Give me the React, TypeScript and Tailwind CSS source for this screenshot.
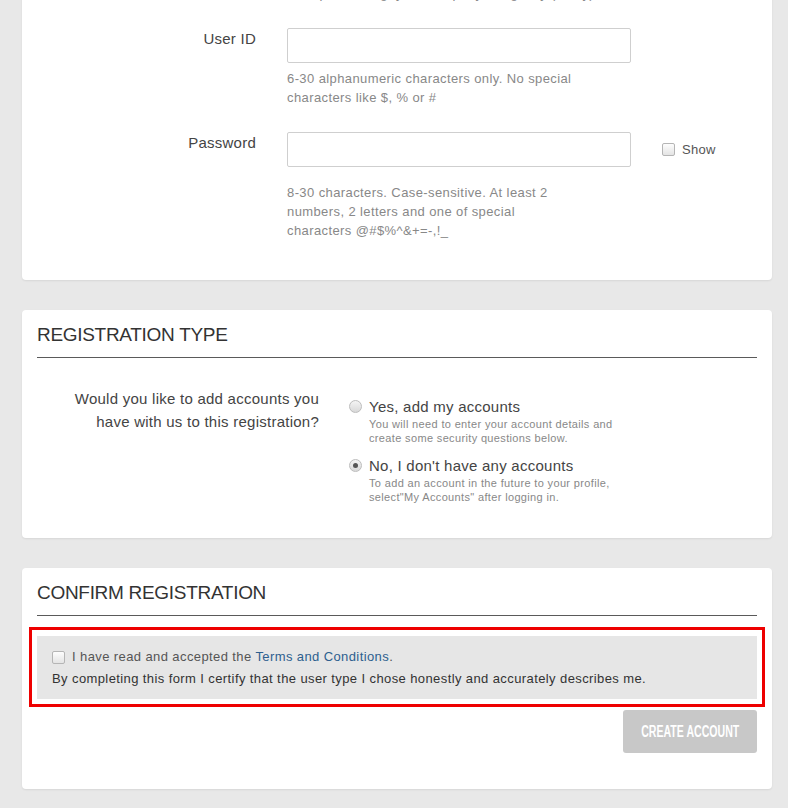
import React from "react";

const font = { fontFamily: '"Liberation Sans", Arial, sans-serif' };

function Checkbox({ className = "" }: { className?: string }) {
  return (
    <span
      className={`inline-block h-[13px] w-[13px] shrink-0 rounded-[2px] border border-[#b5b5b5] bg-gradient-to-b from-[#fdfdfd] to-[#e4e4e4] ${className}`}
    />
  );
}

function Radio({ checked }: { checked?: boolean }) {
  return (
    <span className="mt-[3px] grid h-[13px] w-[13px] shrink-0 place-items-center rounded-full border border-[#bdbdbd] bg-gradient-to-b from-[#f4f4f4] to-[#d9d9d9]">
      {checked && <span className="h-[5px] w-[5px] rounded-full bg-[#555]" />}
    </span>
  );
}

function SectionTitle({ children }: { children: React.ReactNode }) {
  return (
    <div className="border-b border-[#5a5a5a] pt-[13px] pb-[10px]">
      <h2 className="text-[19px] leading-[24px] tracking-[-0.3px] text-[#333]">{children}</h2>
    </div>
  );
}

export default function App() {
  return (
    <div style={font} className="min-h-screen overflow-hidden bg-[#e8e8e8] pl-[22px] pr-[16px] pb-[19px]">
      {/* Login details (scrolled, top cut off) */}
      <div className="-mt-[16px] rounded-b-[4px] bg-white pb-[40px] shadow-[0_1px_2px_rgba(0,0,0,0.08)]">
        <p className="pl-[287px] text-[13px] leading-[19px] tracking-[0.4px] text-[#888]">
          Optional, e.g. your company or agency (if any)
        </p>

        <div className="mt-[25px] grid grid-cols-[234px_344px_auto] gap-x-[31px]">
          <label className="pt-[1px] text-right text-[15px] leading-[20px] tracking-[0.25px] text-[#444]">
            User ID
          </label>
          <div>
            <input className="block h-[35px] w-full rounded-[2px] border border-[#cfcfcf] bg-white" />
            <p className="mt-[6px] w-[300px] text-[13px] leading-[19px] tracking-[0.4px] text-[#888]">
              6-30 alphanumeric characters only. No special characters like $, % or #
            </p>
          </div>
          <div />

          <label className="mt-[25px] pt-[1px] text-right text-[15px] leading-[20px] tracking-[0.25px] text-[#444]">
            Password
          </label>
          <div className="mt-[25px]">
            <input
              type="password"
              className="block h-[35px] w-full rounded-[2px] border border-[#cfcfcf] bg-white"
            />
            <p className="mt-[16px] w-[270px] text-[13px] leading-[19px] tracking-[0.4px] text-[#888]">
              8-30 characters. Case-sensitive. At least 2 numbers, 2 letters and one of special
              characters @#$%^&amp;+=-,!_
            </p>
          </div>
          <div className="mt-[25px] flex h-[35px] items-center gap-[7px]">
            <Checkbox />
            <span className="text-[13px] tracking-[0.3px] text-[#555]">Show</span>
          </div>
        </div>
      </div>

      {/* Registration type */}
      <div className="mt-[30px] rounded-[4px] bg-white px-[15px] pb-[34px] shadow-[0_1px_2px_rgba(0,0,0,0.08)]">
        <SectionTitle>REGISTRATION TYPE</SectionTitle>
        <div className="mt-[29px] flex gap-[30px]">
          <p className="w-[282px] pl-[20px] text-right text-[15px] leading-[23px] tracking-[0.25px] text-[#444]">
            Would you like to add accounts you have with us to this registration?
          </p>
          <div className="mt-[10px] flex flex-col gap-[11px]">
            <div className="flex gap-[7px]">
              <Radio />
              <div>
                <div className="text-[15px] leading-[20px] tracking-[0.25px] text-[#444]">
                  Yes, add my accounts
                </div>
                <div className="w-[260px] text-[11px] leading-[14px] tracking-[0.35px] text-[#888]">
                  You will need to enter your account details and create some security questions
                  below.
                </div>
              </div>
            </div>
            <div className="flex gap-[7px]">
              <Radio checked />
              <div>
                <div className="text-[15px] leading-[20px] tracking-[0.25px] text-[#444]">
                  No, I don't have any accounts
                </div>
                <div className="w-[260px] text-[11px] leading-[14px] tracking-[0.35px] text-[#888]">
                  To add an account in the future to your profile, select"My Accounts" after logging
                  in.
                </div>
              </div>
            </div>
          </div>
        </div>
      </div>

      {/* Confirm registration */}
      <div className="mt-[30px] rounded-[4px] bg-white px-[15px] pb-[36px] shadow-[0_1px_2px_rgba(0,0,0,0.08)]">
        <SectionTitle>CONFIRM REGISTRATION</SectionTitle>
        <div className="-mx-[8px] mt-[11px] border-[3px] border-[#ee0000] px-[5px] pt-[6px] pb-[5px]">
          <div className="bg-[#e6e6e6] px-[15px] pt-[10px] pb-[9px] text-[13px] leading-[22px] tracking-[0.4px]">
            <div className="flex items-center gap-[7px] text-[#555]">
              <Checkbox />
              <span>
                I have read and accepted the{" "}
                <a className="text-[#2d5f8f]">Terms and Conditions</a>.
              </span>
            </div>
            <div className="text-[#333]">
              By completing this form I certify that the user type I chose honestly and accurately
              describes me.
            </div>
          </div>
        </div>
        <div className="mt-[3px] flex justify-end">
          <button className="flex h-[43px] w-[134px] items-center justify-center rounded-[3px] bg-[#c8c8c8] text-white">
            <span className="inline-block scale-x-[0.66] whitespace-nowrap text-[16px] font-bold">
              CREATE ACCOUNT
            </span>
          </button>
        </div>
      </div>
    </div>
  );
}
